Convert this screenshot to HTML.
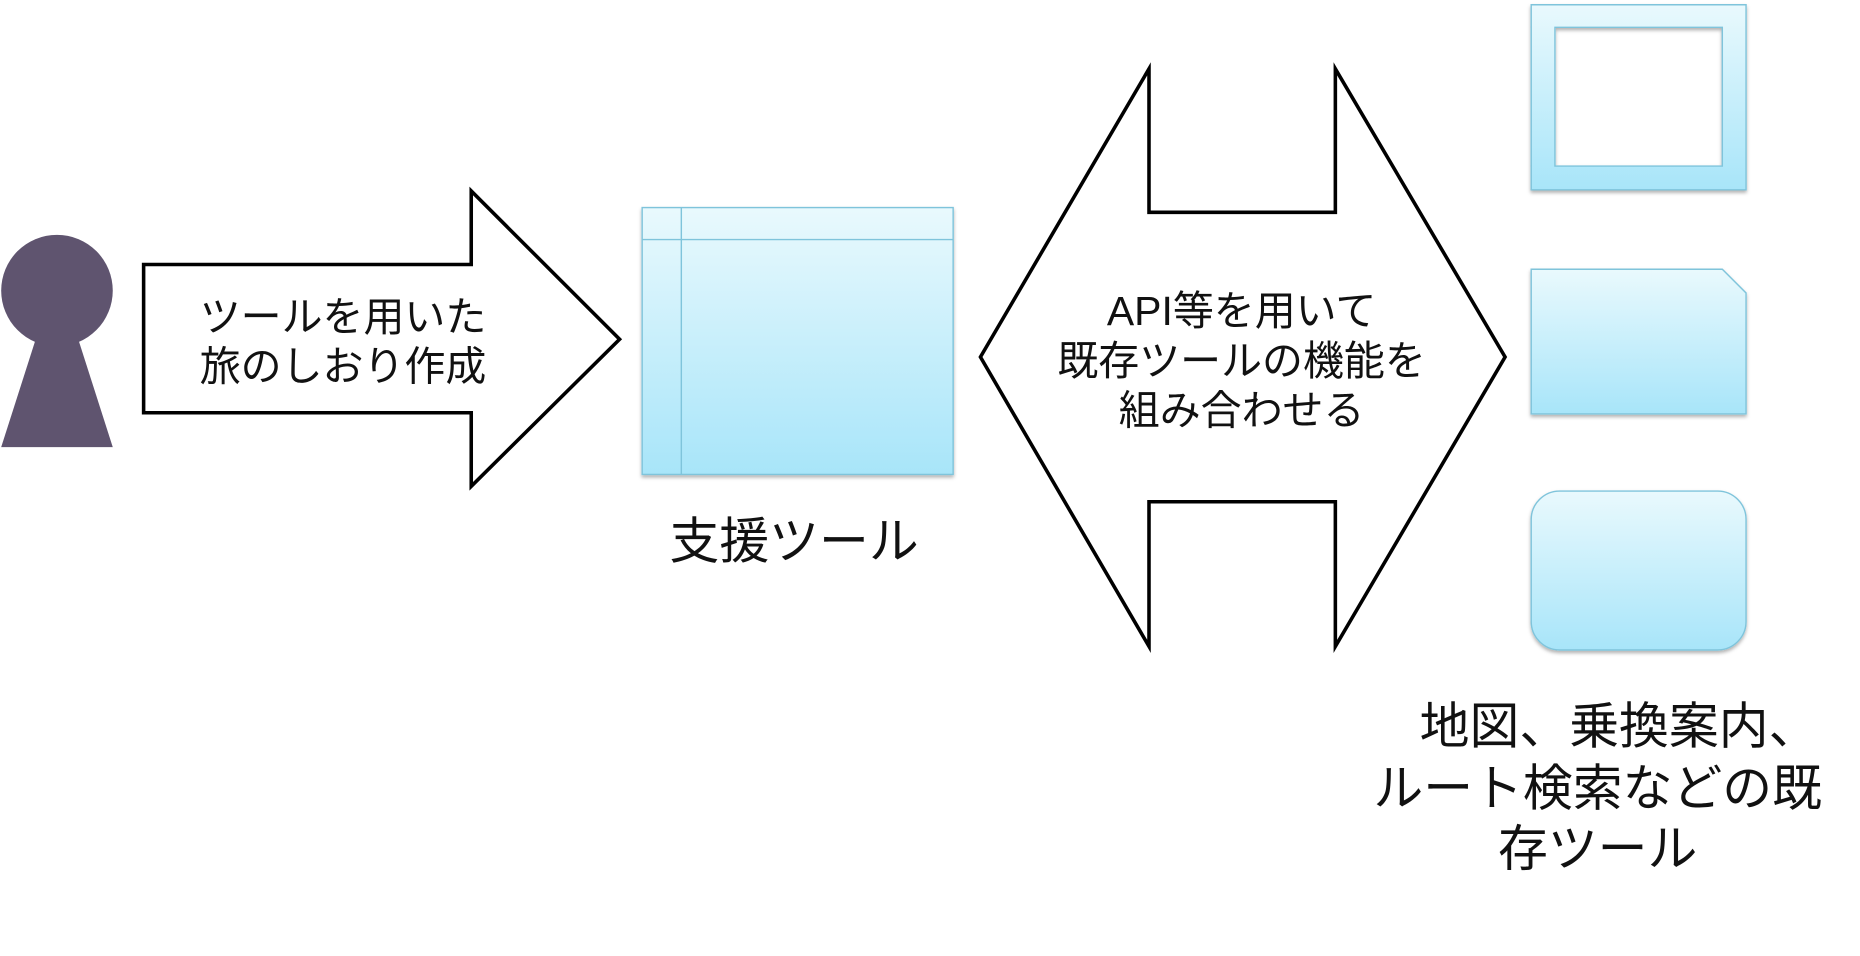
<!DOCTYPE html>
<html><head><meta charset="utf-8"><style>
html,body{margin:0;padding:0;background:#fff;width:1860px;height:956px;overflow:hidden}
svg{display:block}
text{font-family:"Liberation Sans","Noto Sans CJK JP",sans-serif;fill:#111;text-anchor:middle}
</style></head><body>
<svg width="1860" height="956" viewBox="0 0 1567 806" preserveAspectRatio="none" xmlns="http://www.w3.org/2000/svg">
<defs>
<linearGradient id="g" x1="0" y1="0" x2="0" y2="1"><stop offset="0" stop-color="#e9f9fd"/><stop offset="1" stop-color="#a8e5f9"/></linearGradient>
<filter id="s" x="-10%" y="-10%" width="120%" height="120%"><feDropShadow dx="0" dy="2" stdDeviation="1.5" flood-color="#000" flood-opacity="0.3"/></filter>
</defs>
<circle cx="48" cy="245" r="47" fill="#5f546f"/>
<polygon points="32,280 64,280 95,377 1,377" fill="#5f546f"/>
<polygon points="121,223 397,223 397,161 522,286 397,410 397,348 121,348" fill="#fff" stroke="#000" stroke-width="3"/>
<text x="289" y="279" font-size="34.5">ツールを用いた</text>
<text x="289" y="321" font-size="34.5">旅のしおり作成</text>
<rect x="541" y="175" width="262" height="225" fill="url(#g)" stroke="#7fc4db" stroke-width="1.2" filter="url(#s)"/>
<line x1="541" y1="202" x2="803" y2="202" stroke="#7fc4db" stroke-width="1.2"/>
<line x1="574" y1="175" x2="574" y2="400" stroke="#7fc4db" stroke-width="1.2"/>
<text x="669" y="471" font-size="42">支援ツール</text>
<polygon points="968,58 968,179 1125,179 1125,58 1268,301 1125,545 1125,423 968,423 968,545 826,301" fill="#fff" stroke="#000" stroke-width="3"/>
<text x="1046" y="274" font-size="34.5">API等を用いて</text>
<text x="1046" y="316" font-size="34.5">既存ツールの機能を</text>
<text x="1046" y="358" font-size="34.5">組み合わせる</text>
<path d="M1290,4 H1471 V160 H1290 Z M1310,23 V140 H1451 V23 Z" fill="url(#g)" fill-rule="evenodd" stroke="#7fc4db" stroke-width="1.2" filter="url(#s)"/>
<path d="M1290,227 H1451 L1471,247 V349 H1290 Z" fill="url(#g)" stroke="#7fc4db" stroke-width="1.2" filter="url(#s)"/>
<rect x="1290" y="414" width="181" height="134" rx="24" fill="url(#g)" stroke="#7fc4db" stroke-width="1.2" filter="url(#s)"/>
<text x="1364" y="627" font-size="42">地図、乗換案内、</text>
<text x="1346" y="679" font-size="42">ルート検索などの既</text>
<text x="1346" y="730" font-size="42">存ツール</text>
</svg>
</body></html>
